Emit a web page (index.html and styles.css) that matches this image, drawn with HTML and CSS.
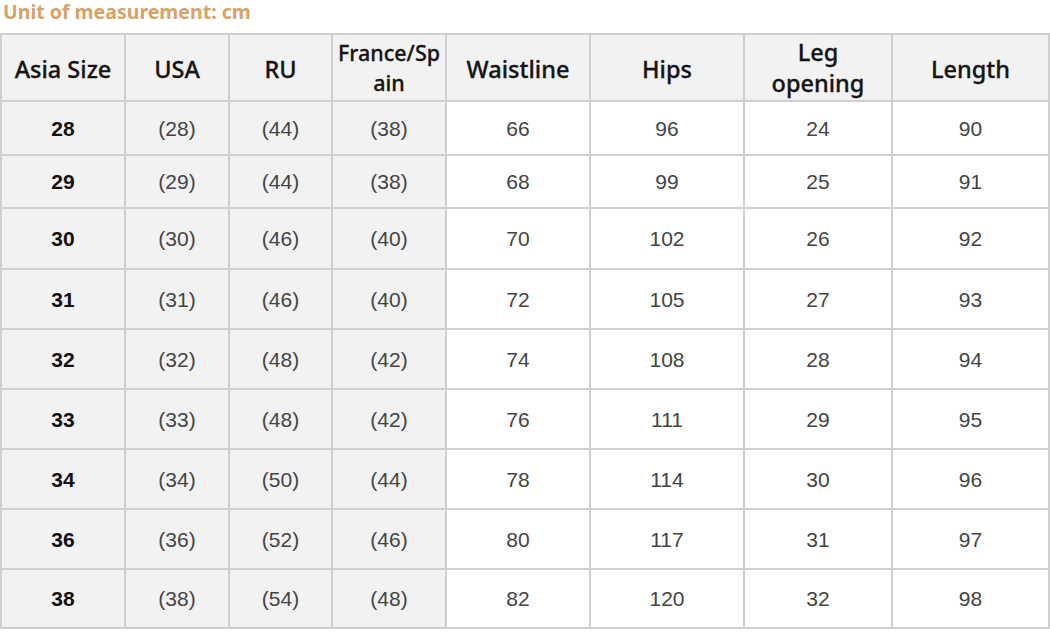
FILE: index.html
```html
<!DOCTYPE html>
<html>
<head>
<meta charset="utf-8">
<link rel="stylesheet" href="styles.css">
</head>
<body>
<div class="unit">Unit of measurement: cm</div>
<table class="size-table">
  <colgroup>
    <col class="c1"><col class="c2"><col class="c3"><col class="c4">
    <col class="c5"><col class="c6"><col class="c7"><col class="c8">
  </colgroup>
  <thead>
    <tr class="r-head">
      <th class="grey">Asia Size</th>
      <th class="grey">USA</th>
      <th class="grey">RU</th>
      <th class="grey two small">France/Sp<br>ain</th>
      <th class="grey">Waistline</th>
      <th class="grey">Hips</th>
      <th class="grey two">Leg<br>opening</th>
      <th class="grey">Length</th>
    </tr>
  </thead>
  <tbody>
    <tr class="r1"><td class="grey key">28</td><td class="grey">(28)</td><td class="grey">(44)</td><td class="grey">(38)</td><td>66</td><td>96</td><td>24</td><td>90</td></tr>
    <tr class="r2"><td class="grey key">29</td><td class="grey">(29)</td><td class="grey">(44)</td><td class="grey">(38)</td><td>68</td><td>99</td><td>25</td><td>91</td></tr>
    <tr class="r3"><td class="grey key">30</td><td class="grey">(30)</td><td class="grey">(46)</td><td class="grey">(40)</td><td>70</td><td>102</td><td>26</td><td>92</td></tr>
    <tr class="r"><td class="grey key">31</td><td class="grey">(31)</td><td class="grey">(46)</td><td class="grey">(40)</td><td>72</td><td>105</td><td>27</td><td>93</td></tr>
    <tr class="r"><td class="grey key">32</td><td class="grey">(32)</td><td class="grey">(48)</td><td class="grey">(42)</td><td>74</td><td>108</td><td>28</td><td>94</td></tr>
    <tr class="r"><td class="grey key">33</td><td class="grey">(33)</td><td class="grey">(48)</td><td class="grey">(42)</td><td>76</td><td>111</td><td>29</td><td>95</td></tr>
    <tr class="r"><td class="grey key">34</td><td class="grey">(34)</td><td class="grey">(50)</td><td class="grey">(44)</td><td>78</td><td>114</td><td>30</td><td>96</td></tr>
    <tr class="r"><td class="grey key">36</td><td class="grey">(36)</td><td class="grey">(52)</td><td class="grey">(46)</td><td>80</td><td>117</td><td>31</td><td>97</td></tr>
    <tr class="r-last"><td class="grey key">38</td><td class="grey">(38)</td><td class="grey">(54)</td><td class="grey">(48)</td><td>82</td><td>120</td><td>32</td><td>98</td></tr>
  </tbody>
</table>
</body>
</html>
```

FILE: styles.css
```css
html, body {
  margin: 0;
  padding: 0;
  background: #ffffff;
}

.unit {
  height: 33px;
  padding-left: 3px;
  font-family: "Noto Sans", "Open Sans", sans-serif;
  font-weight: 700;
  font-size: 19.5px;
  line-height: 23px;
  color: #d9a266;
}

.size-table {
  border-collapse: collapse;
  table-layout: fixed;
  width: 1049px;
  margin-left: 0;
}

.c1 { width: 124px; }
.c2 { width: 104px; }
.c3 { width: 103px; }
.c4 { width: 114px; }
.c5 { width: 144px; }
.c6 { width: 154px; }
.c7 { width: 148px; }
.c8 { width: 157px; }

.size-table th,
.size-table td {
  border: 2px solid #cfcfcf;
  padding: 0;
  text-align: center;
  vertical-align: middle;
}

.size-table th {
  font-family: "Noto Sans", "Open Sans", sans-serif;
  font-weight: 500;
  font-size: 23.5px;
  line-height: 30px;
  color: #151515;
  -webkit-text-stroke: 0.3px #151515;
  padding-top: 3px;
}

.size-table th.two {
  line-height: 31px;
  padding-top: 1px;
}

.size-table th.small {
  font-size: 21.5px;
  line-height: 30px;
  padding-top: 0;
}

.size-table td {
  font-family: "Liberation Sans", Arial, sans-serif;
  font-size: 21px;
  color: #444444;
  padding-top: 1px;
}

.size-table td.key {
  font-weight: 700;
  color: #111111;
}

.grey {
  background: #f2f2f2;
}

.r-head { height: 67px; }
.r1 { height: 54px; }
.r2 { height: 53px; }
.r3 { height: 61px; }
.r { height: 60px; }
.r-last { height: 59px; }
```
